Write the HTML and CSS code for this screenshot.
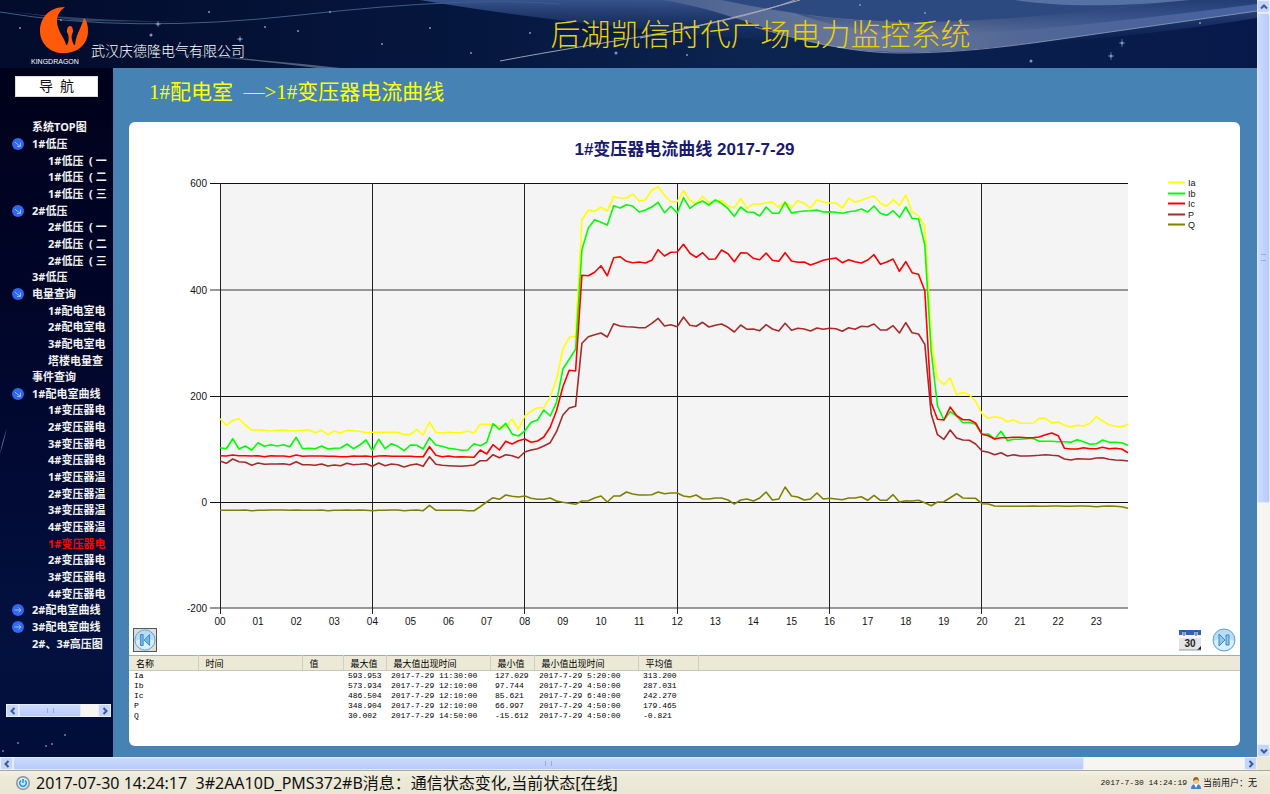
FILE: index.html
```html
<!DOCTYPE html>
<html lang="zh-CN">
<head>
<meta charset="utf-8">
<title>后湖凯信时代广场电力监控系统</title>
<link rel="stylesheet" href="styles.css">
</head>
<body>
<svg class="defs" width="0" height="0" aria-hidden="true">
  <symbol id="node-open" viewBox="0 0 12 12"><circle cx="6" cy="6" r="6" fill="#2f68f5"/><path d="M3 4l2 2 3 2M8.500 4.500V8.500H5" fill="none" stroke="#9dbcff"/></symbol>
  <symbol id="node-closed" viewBox="0 0 12 12"><circle cx="6" cy="6" r="6" fill="#2f68f5"/><path d="M2.500 6H9M6.500 3.500L9 6 6.500 8.500" fill="none" stroke="#9dbcff"/></symbol>
  <symbol id="arrow" viewBox="0 0 8 8"><path d="M5.500 1L2.500 4l3 3" fill="none" stroke="#3f5a8c" stroke-width="2"/></symbol>
</svg>

<div class="app">
  <div class="page">
    <header class="banner">
      <svg class="banner-art" viewBox="0 0 1257 68" preserveAspectRatio="none" aria-hidden="true">
        <defs>
          <linearGradient id="sky" x1="0" x2="1"><stop offset="0" stop-color="#020b2c"/><stop offset=".4" stop-color="#061840"/><stop offset=".6" stop-color="#0c2450"/><stop offset="1" stop-color="#07194a"/></linearGradient>
          <linearGradient id="haze" x1="0" y1="0" x2="0" y2="1"><stop offset="0" stop-color="#36538c"/><stop offset="1" stop-color="#1c3568" stop-opacity="0"/></linearGradient>
          <linearGradient id="ribbon" x1="0" x2="1"><stop offset="0" stop-color="#4a6092"/><stop offset=".35" stop-color="#6b7a9b"/><stop offset=".6" stop-color="#526796"/><stop offset="1" stop-color="#4561a2"/></linearGradient>
          <linearGradient id="shade" x1="0" y1="0" x2="0" y2="1"><stop offset="0" stop-color="#1e3a70" stop-opacity=".9"/><stop offset="1" stop-color="#1e3a70" stop-opacity="0"/></linearGradient>
        </defs>
        <rect width="1257" height="68" fill="url(#sky)"/>
        <path d="M420 0H1257V18Q1000 60 760 40Q560 24 420 0Z" fill="url(#haze)"/>
        <path d="M721 0C780 12 840 22 917 22C1000 22 1130 8 1180 0Z" fill="#2d4a80"/>
        <path d="M662 0C730 10 770 35 830 46C890 57 960 52 1040 42L1257 11V0H1180C1130 8 1000 22 917 22C840 22 780 12 721 0Z" fill="url(#ribbon)"/>
        <path d="M795 13C840 21 880 22 917 22C1000 22 1130 8 1180 0L1257 0V4C1130 20 1020 34 930 34C870 34 830 26 795 13Z" fill="url(#shade)"/>
        <path d="M1015 0C1060 7 1120 7 1190 0Z" fill="#6882b4" opacity=".7"/>
        <path d="M755 27C800 40 850 53 900 53C960 53 1010 46 1040 42L1257 11" fill="none" stroke="#93a0b8" opacity=".8"/>
        <path d="M500 61C610 40 720 28 795 0" fill="none" stroke="#9b9fb5"/>
        <path d="M640 38C700 26 750 14 800 0" fill="none" stroke="#b0a9b5"/>
        <path d="M0 12Q130 34 300 15T560 4" fill="none" stroke="#3f5d86"/>
        <path d="M0 10Q70 20 190 22L80 21Z" fill="#4b6790" opacity=".6"/>
        <path d="M0 44Q190 51 350 69H325Q180 50 0 44Z" fill="#8190ad" opacity=".6"/>
        <g fill="#8097c2"><circle cx="20" cy="28" r="1"/><circle cx="61" cy="20" r="1"/><circle cx="158" cy="24" r="1.500"/><circle cx="151" cy="35" r="1.500"/><circle cx="180" cy="43" r="1"/><circle cx="209" cy="12" r="1"/><circle cx="240" cy="39" r="1.500"/><circle cx="265" cy="27" r="1"/><circle cx="298" cy="31" r="1"/><circle cx="330" cy="12" r="1"/><circle cx="382" cy="44" r="1"/><circle cx="430" cy="28" r="1"/><circle cx="471" cy="53" r="1"/><circle cx="530" cy="33" r="1"/><circle cx="616" cy="53" r="1.500"/><circle cx="687" cy="55" r="1"/><circle cx="860" cy="5" r="1"/><circle cx="925" cy="13" r="1"/><circle cx="961" cy="20" r="1"/><circle cx="1031" cy="61" r="1.500"/><circle cx="1111" cy="56" r="1.500"/><circle cx="1122" cy="43" r="1.500"/><circle cx="1200" cy="23" r="1"/></g>
        <path d="M1111 52v8M1108 56h6M1122 39v8M1119 43h6M158 21v6M155 24h6M240 36v6M237 39h6" stroke="#8097c2" opacity=".6"/>
      </svg>
      <div class="brand">
        <svg class="logo" viewBox="0 0 60 60" role="img" aria-label="KINGDRAGON">
          <path d="M34 0C18 0 9 11 9 24S20 47 33 46C46 46 57 38 57 24C57 19 56 14 53 11C50 22 45 27 44 38H35C34 31 26 24 26 14C26 7 30 3 34 0Z" fill="#ff5a0a"/>
          <path d="M36 38C38 34 38 31 37 27C35 25 36 19 39 19S43 25 41 27C40 31 41 34 43 38Z" fill="#ff5a0a"/>
          <text x="0" y="57" class="logo-name">KINGDRAGON</text>
        </svg>
        <span class="company">武汉庆德隆电气有限公司</span>
      </div>
      <h1 class="system-title">后湖凯信时代广场电力监控系统</h1>
    </header>

    <div class="columns">
      <aside class="sidebar">
        <svg class="side-stars" viewBox="0 0 113 689" preserveAspectRatio="none" aria-hidden="true"><path d="M0 386Q2 374 7 360L3 376Z" fill="#5b7ba0"/><g fill="#6d83ab"><circle cx="18" cy="675" r="1"/><circle cx="46" cy="678" r="1"/><circle cx="52" cy="676" r="1"/><circle cx="65" cy="667" r="1"/><circle cx="3" cy="683" r="1"/></g></svg>
        <button class="nav-title" type="button">导&nbsp; 航</button>
        <nav class="tree" aria-label="导航">
          <a href="#">系统TOP图</a>
          <a href="#" class="parent"><svg><use href="#node-open"/></svg>1#低压</a>
          <a href="#" class="child">1#低压&nbsp; ( 一</a>
          <a href="#" class="child">1#低压&nbsp; ( 二</a>
          <a href="#" class="child">1#低压&nbsp; ( 三</a>
          <a href="#" class="parent"><svg><use href="#node-open"/></svg>2#低压</a>
          <a href="#" class="child">2#低压&nbsp; ( 一</a>
          <a href="#" class="child">2#低压&nbsp; ( 二</a>
          <a href="#" class="child">2#低压&nbsp; ( 三</a>
          <a href="#">3#低压</a>
          <a href="#" class="parent"><svg><use href="#node-open"/></svg>电量查询</a>
          <a href="#" class="child">1#配电室电</a>
          <a href="#" class="child">2#配电室电</a>
          <a href="#" class="child">3#配电室电</a>
          <a href="#" class="child">塔楼电量查</a>
          <a href="#">事件查询</a>
          <a href="#" class="parent"><svg><use href="#node-open"/></svg>1#配电室曲线</a>
          <a href="#" class="child">1#变压器电</a>
          <a href="#" class="child">2#变压器电</a>
          <a href="#" class="child">3#变压器电</a>
          <a href="#" class="child">4#变压器电</a>
          <a href="#" class="child">1#变压器温</a>
          <a href="#" class="child">2#变压器温</a>
          <a href="#" class="child">3#变压器温</a>
          <a href="#" class="child">4#变压器温</a>
          <a href="#" class="child current">1#变压器电</a>
          <a href="#" class="child">2#变压器电</a>
          <a href="#" class="child">3#变压器电</a>
          <a href="#" class="child">4#变压器电</a>
          <a href="#" class="parent"><svg><use href="#node-closed"/></svg>2#配电室曲线</a>
          <a href="#" class="parent"><svg><use href="#node-closed"/></svg>3#配电室曲线</a>
          <a href="#">2#、3#高压图</a>
        </nav>
        <div class="scroll scroll-x side-scroll">
          <button type="button" aria-label="向左"><svg><use href="#arrow"/></svg></button>
          <div class="track"><div class="thumb thumb-side"></div></div>
          <button type="button" class="right" aria-label="向右"><svg><use href="#arrow"/></svg></button>
        </div>
      </aside>

      <main class="content">
        <h2 class="crumb">1#配电室&nbsp; —&gt;1#变压器电流曲线</h2>
        <section class="panel">
          <h3 class="chart-title">1#变压器电流曲线 2017-7-29</h3>
          <svg id="chart" class="chart" viewBox="129 170 1111 456" role="img" aria-label="1#变压器电流曲线"></svg>
          <div class="pager">
            <button type="button" class="round focused" aria-label="前一天">
              <svg viewBox="0 0 24 24"><circle cx="12" cy="12" r="11" fill="#b9dcf6" stroke="#5f9fd0"/><path d="M2 13a10 9 0 0 0 20 0Q12 7 2 13Z" fill="#d8effc"/><path d="M7 6h3v12H7ZM17 6v12l-6-6Z" fill="#6fb7ea" stroke="#3c86c2"/></svg>
            </button>
            <span class="space"></span>
            <button type="button" class="calendar" aria-label="选择日期">
              <svg viewBox="0 0 22 22"><path d="M0 1h22v20H0Z" fill="#e4e4e4"/><path d="M0 1h22v5H0Z" fill="#2b66b5"/><path d="M0 6h22v3H0Z" fill="#fafafa"/><path d="M5 3v5M17 3v5" stroke="#fff" stroke-width="3"/><path d="M5 2v5M17 2v5" stroke="#333"/><path d="M22 17v4h-4Z" fill="#222"/><path d="M0 21h22" stroke="#999"/><text x="11" y="18" text-anchor="middle" class="cal-day">30</text></svg>
            </button>
            <button type="button" class="round" aria-label="后一天">
              <svg viewBox="0 0 24 24"><circle cx="12" cy="12" r="11" fill="#b9dcf6" stroke="#5f9fd0"/><path d="M2 13a10 9 0 0 0 20 0Q12 7 2 13Z" fill="#d8effc"/><path d="M14 7h3v10h-3ZM7 6v12l6-6Z" fill="#8cc7ef" stroke="#3c86c2"/></svg>
            </button>
          </div>
          <table class="stats">
            <colgroup><col class="c-name"><col class="c-time"><col class="c-val"><col class="c-max"><col class="c-maxt"><col class="c-min"><col class="c-mint"><col class="c-avg"><col></colgroup>
            <thead><tr><th>名称</th><th>时间</th><th>值</th><th>最大值</th><th>最大值出现时间</th><th>最小值</th><th>最小值出现时间</th><th>平均值</th><th></th></tr></thead>
            <tbody>
              <tr><td>Ia</td><td></td><td></td><td>593.953</td><td>2017-7-29 11:30:00</td><td>127.029</td><td>2017-7-29 5:20:00</td><td>313.200</td><td></td></tr>
              <tr><td>Ib</td><td></td><td></td><td>573.934</td><td>2017-7-29 12:10:00</td><td>97.744</td><td>2017-7-29 4:50:00</td><td>287.031</td><td></td></tr>
              <tr><td>Ic</td><td></td><td></td><td>486.504</td><td>2017-7-29 12:10:00</td><td>85.621</td><td>2017-7-29 6:40:00</td><td>242.270</td><td></td></tr>
              <tr><td>P</td><td></td><td></td><td>348.904</td><td>2017-7-29 12:10:00</td><td>66.997</td><td>2017-7-29 4:50:00</td><td>179.465</td><td></td></tr>
              <tr><td>Q</td><td></td><td></td><td>30.002</td><td>2017-7-29 14:50:00</td><td>-15.612</td><td>2017-7-29 4:50:00</td><td>-0.821</td><td></td></tr>
            </tbody>
          </table>
        </section>
      </main>
    </div>
  </div>

  <div class="scroll scroll-y">
    <button type="button" class="up" aria-label="向上"><svg><use href="#arrow"/></svg></button>
    <div class="track"><div class="thumb thumb-page-y"></div></div>
    <button type="button" class="down" aria-label="向下"><svg><use href="#arrow"/></svg></button>
  </div>
  <div class="scroll scroll-x page-x">
    <button type="button" aria-label="向左"><svg><use href="#arrow"/></svg></button>
    <div class="track"><div class="thumb thumb-page-x"></div></div>
    <button type="button" class="right" aria-label="向右"><svg><use href="#arrow"/></svg></button>
  </div>
  <div class="corner"></div>

  <footer class="status">
    <svg class="power" viewBox="0 0 14 14" aria-hidden="true"><circle cx="7" cy="7" r="7" fill="#8d9299"/><circle cx="7" cy="7" r="5.500" fill="#d5ecfb"/><path d="M5 4.500a3.300 3.300 0 1 0 4 0M7 3v4" fill="none" stroke="#1e90e8" stroke-width="1.500"/></svg>
    <span class="message">2017-07-30 14:24:17&nbsp; 3#2AA10D_PMS372#B消息：</span>
    <span class="message event">通信状态变化,当前状态[在线]</span>
    <span class="space"></span>
    <time class="clock">2017-7-30 14:24:19</time>
    <svg class="user" viewBox="0 0 12 12" aria-hidden="true"><path d="M1 12q0-5 5-5t5 5Z" fill="#3f83cc"/><path d="M4 7l2 4 2-4Z" fill="#fff"/><circle cx="6" cy="4" r="3" fill="#f3c58e"/><path d="M3 4q0-4 3-4t3 4L7 2.500Z" fill="#9a6a2a"/></svg>
    <span class="who">当前用户：无</span>
  </footer>
</div>
<script src="chart.js"></script>
</body>
</html>
```
FILE: styles.css
```css
* { box-sizing: border-box; }
html, body { height: 100%; margin: 0; }
body { font-family: "Liberation Sans", "Noto Sans CJK SC", sans-serif; overflow: hidden; background: #ece9d8; }
button { margin: 0; padding: 0; border: 0; background: none; font: inherit; cursor: pointer; }
.defs { position: absolute; }
.space { flex: 1; }

.app {
  display: grid;
  grid-template: 1fr 13px 24px / 1fr 13px;
  height: 100vh;
}
.page { display: flex; flex-direction: column; min-width: 0; min-height: 0; background: #4682b4; }

/* banner */
.banner { position: relative; flex: none; height: 68px; background: #071a45; overflow: hidden; }
.banner-art { position: absolute; inset: 0; width: 100%; height: 100%; }
.brand { position: absolute; left: 31px; top: 7px; display: flex; align-items: flex-end; }
.logo { width: 60px; height: 60px; overflow: visible; }
.logo-name { font: 7px "Liberation Sans", sans-serif; fill: #fff; }
.company { color: #fff; font-size: 14px; font-weight: 300; line-height: 20px; padding-bottom: 7px; font-family: "Noto Sans CJK SC", sans-serif; }
.system-title {
  position: absolute; left: 43.8%; top: 10px; margin: 0;
  color: #ecd000; font: 300 30px/44px "Noto Sans CJK SC", sans-serif; white-space: nowrap;
}

.columns { display: flex; flex: 1; min-height: 0; }

/* navigation */
.sidebar {
  position: relative; display: flex; flex-direction: column; flex: none; width: 113px;
  padding: 8px 0 40px;
  background: linear-gradient(#00011a, #010830 50%, #031140 85%, #020d38);
}
.side-stars { position: absolute; inset: 0; width: 100%; height: 100%; pointer-events: none; }
.nav-title {
  flex: none; width: 83px; height: 21px; margin-left: 15px;
  background: #fff; color: #111; border: 1px solid #ddd;
  font: 14px/18px "Liberation Serif", "Noto Sans CJK SC", serif;
}
.tree {
  display: grid; grid-auto-rows: 1fr; flex: 1; min-height: 0;
  margin: 22px 2px 52px 0; overflow: hidden;
}
.tree a {
  display: flex; align-items: center; min-height: 0; padding-left: 32px; position: relative;
  color: #f2f2f2; text-decoration: none; white-space: nowrap;
  font: bold 11px/16px "Noto Sans", "Noto Sans CJK SC", sans-serif;
}
.tree a.parent { padding-left: 12px; }
.tree a.parent svg { flex: none; width: 12px; height: 12px; margin-right: 8px; }
.tree a.child { padding-left: 48px; }
.tree a.current { color: #f00; }

/* scrollbars */
.scroll { display: flex; background: #f6f5f1; }
.scroll-y { flex-direction: column; }
.scroll button {
  display: flex; align-items: center; justify-content: center; flex: none; width: 13px; height: 13px;
  background: #c3d4fd; border: 1px solid #e8eefc; border-radius: 2px;
}
.scroll button svg { width: 8px; height: 8px; }
.right svg { transform: rotate(180deg); }
.up svg { transform: rotate(90deg); }
.down svg { transform: rotate(270deg); }
.track { flex: 1; min-width: 0; min-height: 0; }
.thumb {
  display: flex; align-items: center; justify-content: center; height: 100%;
  border: 1px solid #dfe8fd; border-radius: 2px; background: linear-gradient(#cbdafe, #b8cbf8);
}
.thumb::after { content: ""; width: 5px; height: 5px; border: solid #8fb0ee; border-width: 0 1px; }
.scroll-y .thumb { background: linear-gradient(90deg, #cbdafe, #b8cbf8); }
.scroll-y .thumb::after { border-width: 1px 0; }
.side-scroll { flex: none; margin: 0 2px 0 6px; }
.thumb-side { width: 79%; }
.thumb-page-x { width: 87%; }
.thumb-page-y { height: 67%; }
.corner { background: #ece9d8; }

/* main panel */
.content { display: flex; flex-direction: column; flex: 1; min-width: 0; padding: 8px 17px 11px 16px; }
.crumb { margin: 0 0 14px 20px; color: #ff0; font: 21px/32px "Liberation Serif", "Noto Sans CJK SC", serif; }
.panel {
  display: flex; flex-direction: column; flex: 1; min-height: 0; overflow: hidden;
  background: #fff; border-radius: 6px;
}
.chart-title { margin: 0; padding: 16px 0 8px; color: #191970; font-size: 17px; line-height: 24px; text-align: center; }
.chart { display: block; flex: none; width: 100%; }
.chart text { font: 10px "Liberation Sans", sans-serif; fill: #111; }
.chart .legend { font-size: 9px; }
.pager { display: flex; align-items: center; flex: none; gap: 11px; padding: 2px 4px 3px; }
.pager button { display: flex; width: 24px; height: 24px; }
.pager svg { width: 100%; height: 100%; }
.pager .focused { border: 1px solid #555; background: #ddd; }
.pager .calendar { width: 22px; height: 22px; }
.cal-day { font: bold 10px "Liberation Sans", sans-serif; fill: #222; }

.stats { flex: none; width: 100%; table-layout: fixed; border-collapse: collapse; border-top: 1px solid #8fb0cf; }
.c-name { width: 69px; }
.c-time { width: 104px; }
.c-val { width: 41px; }
.c-max { width: 43px; }
.c-maxt { width: 104px; }
.c-min { width: 44px; }
.c-mint { width: 104px; }
.c-avg { width: 60px; }
.stats th {
  height: 15px; padding: 0 0 0 7px; text-align: left; white-space: nowrap;
  background: #ece9d8; border-right: 1px solid #d3cfbe; border-bottom: 1px solid #cbc7b8;
  font: 9px/13px "Noto Sans CJK SC", sans-serif; color: #000;
}
.stats th:last-child { border-right: 0; }
.stats td { height: 10px; padding: 0 0 0 5px; white-space: nowrap; font: 8px/10px "Liberation Mono", monospace; color: #000; }

/* status bar */
.status {
  grid-column: 1 / -1; display: flex; align-items: center; padding: 0 13px 0 16px;
  border-top: 1px solid #aca899; background: linear-gradient(#f3f1e6, #ece9d8 30%, #e9e6d4);
  color: #111; white-space: nowrap;
}
.power { width: 14px; height: 14px; margin-right: 6px; }
.message { font: 16px/22px "Noto Sans", "Noto Sans CJK SC", sans-serif; }
.clock { font: 8px/12px "Liberation Mono", monospace; }
.user { width: 12px; height: 12px; margin: 0 1px 0 3px; }
.who { font: 9px/12px "Noto Sans CJK SC", sans-serif; }
```
FILE: chart.js
```js
// Samples every 10 minutes, 144 per series. Each number is a depth below the
// top of the drawing in thirds of a unit: 40 is the 600 line, 997 the 0 line.
const series = [
  { name: "Ia", color: "#ffff00", data: [
    746,766,751,746,765,780,779,781,783,781,780,782,782,781,779,788,781,794,783,790,781,782,784,788,
    787,787,787,787,787,794,793,778,795,756,787,789,787,788,788,783,789,763,763,765,768,769,748,778,
    738,724,713,713,680,628,537,502,499,150,120,124,112,123,80,84,84,72,92,90,61,50,76,95,
    95,62,91,101,79,98,92,92,107,114,85,115,101,103,98,96,112,95,113,92,100,114,90,96,
    99,99,114,85,97,91,83,78,100,109,89,106,75,125,138,167,510,625,644,623,674,667,675,694,
    731,745,740,743,755,749,760,760,760,745,745,759,756,766,771,766,768,760,740,753,764,769,771,762] },
  { name: "Ib", color: "#00ff00", data: [
    833,836,806,837,828,840,818,829,824,828,824,830,802,836,835,836,828,837,835,834,822,836,825,810,
    841,808,836,821,829,842,825,826,837,803,825,829,835,837,841,840,821,827,817,761,778,760,792,798,
    783,757,750,720,738,697,597,568,538,240,174,149,157,165,107,114,104,108,126,120,111,97,128,109,
    129,83,115,101,93,105,90,100,116,139,111,126,127,138,111,130,130,97,129,125,123,122,120,126,
    125,127,130,125,123,117,126,108,130,136,122,142,111,145,147,225,545,708,750,725,738,758,757,763,
    793,792,807,784,812,808,808,806,805,814,814,814,815,815,817,809,815,823,821,810,817,817,818,826] },
  { name: "Ic", color: "#ff0000", data: [
    857,858,855,857,857,858,857,860,857,858,858,860,855,859,858,858,858,859,859,860,860,858,859,858,
    860,858,857,859,859,859,859,860,860,830,856,860,858,861,860,861,862,840,852,824,840,814,822,812,
    807,817,813,801,772,722,650,601,603,316,317,307,287,317,263,260,274,278,276,279,271,239,258,247,
    246,223,250,262,248,268,267,240,251,275,248,249,265,269,249,271,274,248,273,277,276,285,278,271,
    267,264,278,269,275,279,270,254,283,276,267,304,275,308,313,362,698,748,750,711,737,749,749,759,
    793,797,807,803,803,802,802,803,803,801,794,789,797,835,837,837,833,836,836,832,836,835,837,848] },
  { name: "P", color: "#a52a2a", data: [
    873,880,867,875,877,886,879,883,882,882,881,884,875,884,884,886,882,888,885,887,880,884,883,881,
    889,879,887,882,884,891,885,882,889,860,883,886,887,888,889,887,885,872,872,854,863,854,857,864,
    846,840,836,828,818,785,735,714,709,520,500,494,489,501,461,468,470,471,473,473,460,445,468,464,
    470,441,466,469,457,471,466,462,472,486,465,478,477,482,464,477,483,460,481,475,477,483,474,478,
    475,476,484,473,478,469,470,462,480,480,467,489,458,488,492,523,732,794,808,780,804,810,811,822,
    843,847,854,848,858,854,858,858,857,856,854,856,857,867,870,866,867,868,864,863,868,870,871,873] },
  { name: "Q", color: "#808000", data: [
    1021,1021,1021,1021,1020,1022,1021,1021,1020,1020,1020,1021,1020,1021,1021,1021,1020,1022,1021,1021,1020,1021,1020,1021,
    1022,1021,1021,1020,1020,1022,1021,1020,1022,1006,1021,1021,1021,1021,1021,1022,1022,1010,996,983,988,975,979,981,
    978,985,988,988,984,993,997,1000,1003,993,992,984,978,996,978,978,966,972,975,975,974,966,971,969,
    969,978,981,975,987,987,984,984,990,1002,990,987,993,984,966,990,987,951,978,981,990,987,969,987,
    985,987,989,984,984,980,991,976,991,991,974,996,992,993,991,998,1007,996,995,983,971,984,985,985,
    1001,1002,1008,1009,1009,1009,1009,1009,1008,1009,1009,1008,1008,1009,1009,1008,1008,1009,1010,1009,1008,1009,1010,1015] }
];

const LEFT = 220, RIGHT = 1128, TOP = 183, BOTTOM = 608;
const hour = (RIGHT - LEFT) * 6 / 143;
const parts = [`<rect x="${LEFT}" y="${TOP}" width="${RIGHT - LEFT}" height="${BOTTOM - TOP}" fill="#f4f4f4"/>`];

[[600, 183], [400, 290], [200, 396], [0, 502], [-200, 608]].forEach(([label, y]) => {
  const soft = label === 400 || label === -200;
  const edge = soft ? y : y + 0.5;
  parts.push(`<path d="M${LEFT - 10} ${edge}H${RIGHT}" stroke="${soft ? "#777" : "#111"}" stroke-width="${soft ? 1.5 : 1}"/>`);
  parts.push(`<text x="${LEFT - 13}" y="${y + 4}" text-anchor="end">${label}</text>`);
});

for (let h = 0; h < 24; h++) {
  const x = LEFT + h * hour;
  if (h % 4 === 0) {
    const line = Math.floor(x) + 0.5;
    parts.push(`<path d="M${line} ${TOP}V${BOTTOM + 6}" stroke="#222"/>`);
  }
  parts.push(`<text x="${x}" y="625" text-anchor="middle">${String(h).padStart(2, "0")}</text>`);
}

series.forEach((s, row) => {
  const points = s.data.map((v, i) => `${(LEFT + i * hour / 6).toFixed(1)},${(170 + v / 3).toFixed(1)}`).join(" ");
  parts.push(`<polyline points="${points}" fill="none" stroke="${s.color}" stroke-width="1.6" stroke-linejoin="round"/>`);
  const y = 182 + Math.round(row * 10.6);
  parts.push(`<path d="M1168 ${y + 0.5}h17" stroke="${s.color}" stroke-width="2"/>`);
  parts.push(`<text class="legend" x="1188" y="${y + 4}">${s.name}</text>`);
});

document.getElementById("chart").innerHTML = parts.join("");
```
